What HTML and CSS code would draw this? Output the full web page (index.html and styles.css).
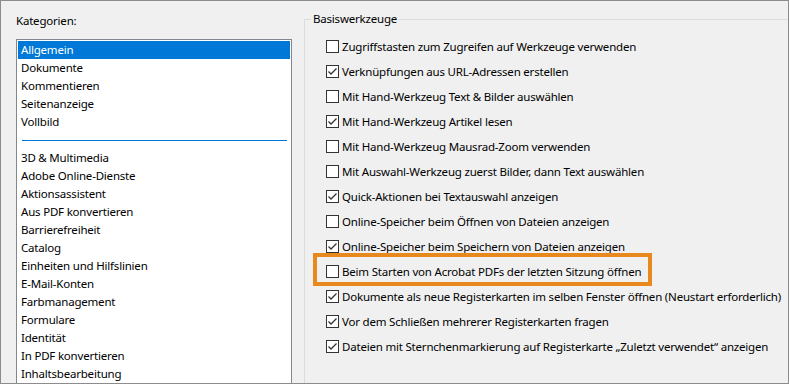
FILE: index.html
```html
<!DOCTYPE html>
<html lang="de">
<head>
<meta charset="utf-8">
<title>Voreinstellungen</title>
<link rel="stylesheet" href="styles.css">
</head>
<body>
<div class="frame">
  <div class="left">
    <div class="label">Kategorien:</div>
    <ul class="list">
      <li class="sel">Allgemein</li>
      <li>Dokumente</li>
      <li>Kommentieren</li>
      <li>Seitenanzeige</li>
      <li>Vollbild</li>
      <li class="sep"><span></span></li>
      <li>3D &amp; Multimedia</li>
      <li>Adobe Online-Dienste</li>
      <li>Aktionsassistent</li>
      <li>Aus PDF konvertieren</li>
      <li>Barrierefreiheit</li>
      <li>Catalog</li>
      <li>Einheiten und Hilfslinien</li>
      <li>E-Mail-Konten</li>
      <li>Farbmanagement</li>
      <li>Formulare</li>
      <li>Identität</li>
      <li>In PDF konvertieren</li>
      <li>Inhaltsbearbeitung</li>
    </ul>
  </div>
  <fieldset class="group">
    <legend>Basiswerkzeuge</legend>
    <div class="opts">
      <div class="opt"><span class="cb"></span><span>Zugriffstasten zum Zugreifen auf Werkzeuge verwenden</span></div>
      <div class="opt"><span class="cb on"><svg viewBox="0 0 11 11" width="11" height="11"><path d="M1.5 5.5 L4 8 L9.5 2.5" /></svg></span><span>Verknüpfungen aus URL-Adressen erstellen</span></div>
      <div class="opt"><span class="cb"></span><span>Mit Hand-Werkzeug Text &amp; Bilder auswählen</span></div>
      <div class="opt"><span class="cb on"><svg viewBox="0 0 11 11" width="11" height="11"><path d="M1.5 5.5 L4 8 L9.5 2.5" /></svg></span><span>Mit Hand-Werkzeug Artikel lesen</span></div>
      <div class="opt"><span class="cb"></span><span>Mit Hand-Werkzeug Mausrad-Zoom verwenden</span></div>
      <div class="opt"><span class="cb"></span><span>Mit Auswahl-Werkzeug zuerst Bilder, dann Text auswählen</span></div>
      <div class="opt"><span class="cb on"><svg viewBox="0 0 11 11" width="11" height="11"><path d="M1.5 5.5 L4 8 L9.5 2.5" /></svg></span><span>Quick-Aktionen bei Textauswahl anzeigen</span></div>
      <div class="opt"><span class="cb"></span><span>Online-Speicher beim Öffnen von Dateien anzeigen</span></div>
      <div class="opt"><span class="cb on"><svg viewBox="0 0 11 11" width="11" height="11"><path d="M1.5 5.5 L4 8 L9.5 2.5" /></svg></span><span>Online-Speicher beim Speichern von Dateien anzeigen</span></div>
      <div class="opt marked"><span class="cb"></span><span>Beim Starten von Acrobat PDFs der letzten Sitzung öffnen</span></div>
      <div class="opt"><span class="cb on"><svg viewBox="0 0 11 11" width="11" height="11"><path d="M1.5 5.5 L4 8 L9.5 2.5" /></svg></span><span>Dokumente als neue Registerkarten im selben Fenster öffnen (Neustart erforderlich)</span></div>
      <div class="opt"><span class="cb on"><svg viewBox="0 0 11 11" width="11" height="11"><path d="M1.5 5.5 L4 8 L9.5 2.5" /></svg></span><span>Vor dem Schließen mehrerer Registerkarten fragen</span></div>
      <div class="opt"><span class="cb on"><svg viewBox="0 0 11 11" width="11" height="11"><path d="M1.5 5.5 L4 8 L9.5 2.5" /></svg></span><span>Dateien mit Sternchenmarkierung auf Registerkarte „Zuletzt verwendet“ anzeigen</span></div>
    </div>
  </fieldset>
</div>
</body>
</html>
```

FILE: styles.css
```css
* { box-sizing: border-box; }
html, body { margin: 0; padding: 0; background: #f0f0f0; }
body {
  font-family: "Noto Sans", "Open Sans", sans-serif;
  font-size: 11.5px;
  letter-spacing: -0.2px;
  color: #000;
}
.frame {
  width: 789px;
  height: 384px;
  border: 1px solid #8c8c8c;
  background: #f0f0f0;
  display: flex;
  overflow: hidden;
}
.left {
  width: 291px;
  flex: none;
  padding: 11px 0 0 15px;
  display: flex;
  flex-direction: column;
}
.label {
  line-height: 18px;
  height: 18px;
  margin-bottom: 9px;
}
.list {
  list-style: none;
  margin: 0;
  padding: 1px 1px 0 1px;
  border: 1px solid #828790;
  background: #fff;
  height: 400px;
  flex: none;
}
.list li {
  height: 18px;
  line-height: 18px;
  padding-left: 3px;
  white-space: nowrap;
}
.list li.sel {
  background: #0078d7;
  color: #fff;
}
.list li.sep {
  display: flex;
  align-items: center;
  padding: 0 3px 0 4px;
}
.list li.sep span {
  display: block;
  flex: 1;
  height: 1px;
  background: #0078d7;
}
.group {
  flex: 1;
  margin: 9px 0 0 12px;
  padding: 0;
  border: 0;
  border-top: 1px solid #dcdcdc;
  border-left: 1px solid #dcdcdc;
  min-width: 0;
}
.group legend {
  margin-left: 6px;
  padding: 0 2px;
  line-height: 18px;
  height: 18px;
}
.opts {
  padding: 6px 0 0 21px;
}
.opt {
  height: 25px;
  display: flex;
  align-items: center;
  white-space: nowrap;
}
.opt.marked {
  position: relative;
  width: fit-content;
}
.opt.marked::after {
  content: "";
  position: absolute;
  left: -13px;
  right: -11px;
  top: -6px;
  bottom: -2px;
  border: 4px solid #e8891d;
}
.cb {
  width: 13px;
  height: 13px;
  flex: none;
  border: 1px solid #333;
  background: #fff;
  margin-right: 3px;
  display: flex;
  align-items: center;
  justify-content: center;
}
.cb svg path {
  fill: none;
  stroke: #333;
  stroke-width: 1.3;
}
```
